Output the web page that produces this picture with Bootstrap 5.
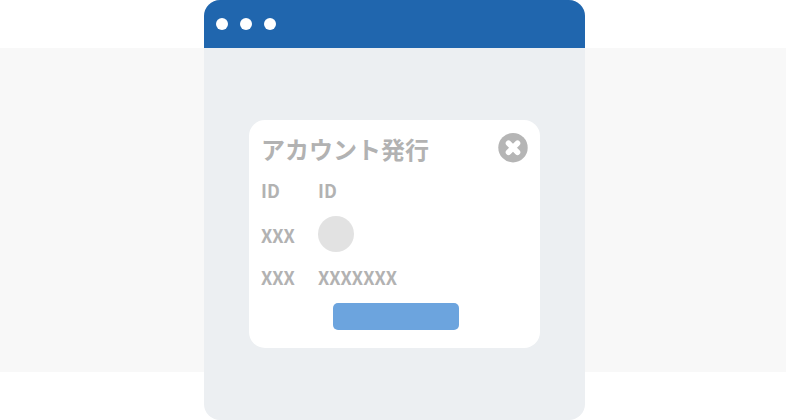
<!DOCTYPE html>
<html lang="ja">
<head>
    <meta charset="UTF-8">
    <title>アカウント発行</title>
    <meta name="viewport" content="width=device-width, initial-scale=1">
    <link href="https://cdn.jsdelivr.net/npm/bootstrap@5.3.3/dist/css/bootstrap.min.css" rel="stylesheet">
    <style>
        body {
            background: #fff;
            font-family: "Noto Sans CJK JP", "Noto Sans", sans-serif;
            overflow: hidden;
        }
        .stage {
            display: grid;
            width: 786px;
            height: 420px;
        }
        .stage > * {
            grid-area: 1 / 1;
        }
        .band {
            background: #f8f8f8;
            margin: 48px 0;
        }
        .win {
            width: 381px;
            height: 420px;
            margin-left: 204px;
            background: #eceff2;
            border-radius: 16px;
            overflow: hidden;
        }
        .win-bar {
            height: 48px;
            background: #2066ae;
            padding-left: 12px;
            gap: 12px;
        }
        .win-dot {
            width: 12px;
            height: 12px;
            border-radius: 50%;
            background: #fff;
        }
        .win-body {
            padding: 72px 45px 0;
        }
        .dialog {
            width: 291px;
            height: 228px;
            background: #fff;
            border-radius: 16px;
            padding: 11px 12px 18px 12px;
            color: #b2b2b2;
            font-weight: 700;
        }
        .dialog-title {
            font-size: 24px;
            line-height: 36px;
            height: 36px;
            opacity: .99;
        }
        .field-row {
            font-size: 18px;
            line-height: 26px;
            opacity: .99;
        }
        .field-label {
            width: 57px;
            flex: none;
        }
        .row-id {
            margin-top: 10px;
        }
        .row-avatar {
            margin-top: 13px;
        }
        .row-avatar .field-label {
            padding-top: 6px;
        }
        .row-last {
            margin-top: 12px;
        }
        .avatar {
            width: 36px;
            height: 36px;
            border-radius: 50%;
            background: #e2e2e2;
        }
        .submit-bar {
            width: 126px;
            height: 27px;
            margin-left: 72px;
            background: #6ca4de;
            border: 0;
            border-radius: 5px;
            padding: 0;
        }
        .close-icon {
            margin-top: 2px;
        }
    </style>
</head>
<body>
    <div class="stage">
        <div class="band"></div>
        <div class="win">
            <div class="win-bar d-flex align-items-center">
                <span class="win-dot"></span>
                <span class="win-dot"></span>
                <span class="win-dot"></span>
            </div>
            <div class="win-body">
                <div class="dialog d-flex flex-column">
                    <div class="d-flex justify-content-between align-items-start">
                        <div class="dialog-title">アカウント発行</div>
                        <svg class="close-icon" width="30" height="30" viewBox="0 0 30 30">
                            <circle cx="15" cy="14.7" r="14.7" fill="#b5b5b5"/>
                            <path d="M10.5 10.2 19.5 19.2M19.5 10.2 10.5 19.2" stroke="#fff" stroke-width="5.6" stroke-linecap="round"/>
                        </svg>
                    </div>
                    <div class="field-row row-id d-flex"><span class="field-label">ID</span><span>ID</span></div>
                    <div class="field-row row-avatar d-flex"><span class="field-label">XXX</span><span class="avatar"></span></div>
                    <div class="field-row row-last d-flex"><span class="field-label">XXX</span><span>XXXXXXX</span></div>
                    <button type="button" class="submit-bar align-self-start mt-auto"></button>
                </div>
            </div>
        </div>
    </div>
    <script src="https://cdn.jsdelivr.net/npm/bootstrap@5.3.3/dist/js/bootstrap.bundle.min.js"></script>
</body>
</html>
